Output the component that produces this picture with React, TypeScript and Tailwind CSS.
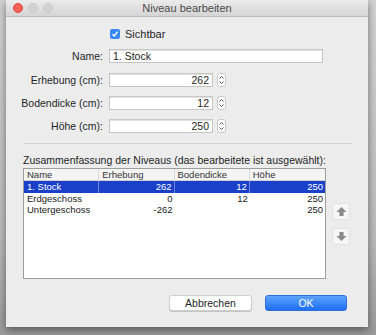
import React from 'react';

const rows = [
  { name: '1. Stock', elevation: '262', floor: '12', height: '250', selected: true },
  { name: 'Erdgeschoss', elevation: '0', floor: '12', height: '250', selected: false },
  { name: 'Untergeschoss', elevation: '-262', floor: '', height: '250', selected: false },
];

const Spinner = () => (
  <div className="ml-[4px] flex h-[14px] w-[9px] items-center justify-center rounded-[3px] border border-[#c9c9c9] bg-white">
    <svg width="5" height="10" viewBox="0 0 5 10" fill="none" stroke="#555" strokeWidth="1">
      <path d="M0.5 3.5 L2.5 1.5 L4.5 3.5" />
      <path d="M0.5 6.5 L2.5 8.5 L4.5 6.5" />
    </svg>
  </div>
);

const NumberRow = ({ label, value, className }: { label: string; value: string; className?: string }) => (
  <div className={`flex h-[14px] items-center leading-[14px] ${className ?? ''}`}>
    <div className="w-[103px] pr-[6px] text-right">{label}</div>
    <div className="flex h-[14px] w-[104px] items-center justify-end border border-[#c6c6c6] bg-white pr-[3px] shadow-[inset_0_1px_0_#e2e2e2]">
      {value}
    </div>
    <Spinner />
  </div>
);

const Arrow = ({ down }: { down?: boolean }) => (
  <button className="flex h-[17px] w-[18px] items-center justify-center rounded-[3px] border border-[#e0e0e0] bg-[#f6f6f6]">
    <svg width="11" height="11" viewBox="0 0 12 12" className={down ? 'rotate-180' : ''}>
      <path d="M6 1 L11.5 6.5 H8.3 V11 H3.7 V6.5 H0.5 Z" fill="#8a8a8a" />
    </svg>
  </button>
);

export default function App() {
  return (
    <div className="h-[335px] w-[376px] overflow-hidden bg-[linear-gradient(#d2d2d2,#bcbcbc_70%,#9a9a9a)] pl-[6px] font-['Liberation_Sans',sans-serif] text-[10.5px] text-[#1f1f1f]">
      <div className="flex h-[327px] w-[362px] flex-col bg-[#ececec] shadow-[0_3px_8px_rgba(0,0,0,0.45)]">
        {/* title bar */}
        <div className="grid h-[17px] grid-cols-[1fr_auto_1fr] items-center border-b border-[#bdbdbd] bg-[linear-gradient(#ebebeb,#d4d4d4)]">
          <div className="flex gap-[5px] pl-[7px]">
            <span className="h-[10px] w-[10px] rounded-full border border-[#e0443e] bg-[#fc5f57]" />
            <span className="h-[10px] w-[10px] rounded-full border border-[#c8c8c8] bg-[#d2d2d2]" />
            <span className="h-[10px] w-[10px] rounded-full border border-[#c8c8c8] bg-[#d2d2d2]" />
          </div>
          <div className="text-[11px] leading-[15px] text-[#4a4a4a]">Niveau bearbeiten</div>
          <div />
        </div>

        {/* form */}
        <div className="flex flex-col pl-[17px] pr-[16px]">
          <div className="ml-[87px] mt-[12px] flex h-[10px] items-center leading-[10px]">
            <span className="flex h-[10px] w-[10px] items-center justify-center rounded-[2px] bg-[#3a86f5]">
              <svg width="8" height="8" viewBox="0 0 8 8" fill="none" stroke="white" strokeWidth="1.4">
                <path d="M1.5 4.2 L3.3 6 L6.6 1.8" />
              </svg>
            </span>
            <span className="ml-[5px] text-[11px]">Sichtbar</span>
          </div>

          <div className="-ml-[17px] mt-[10px] flex h-[14px] items-center leading-[14px]">
            <div className="w-[103px] pr-[6px] text-right">Name:</div>
            <div className="flex h-[14px] w-[214px] items-center border border-[#c6c6c6] bg-white pl-[3px] shadow-[inset_0_1px_0_#e2e2e2]">
              1. Stock
            </div>
          </div>
          <NumberRow label="Erhebung (cm):" value="262" className="-ml-[17px] mt-[10px]" />
          <NumberRow label="Bodendicke (cm):" value="12" className="-ml-[17px] mt-[9px]" />
          <NumberRow label="Höhe (cm):" value="250" className="-ml-[17px] mt-[9px]" />

          <div className="mt-[10px] h-px bg-[#d4d4d4]" />

          <div className="mt-[10px] leading-[12px]">Zusammenfassung der Niveaus (das bearbeitete ist ausgewählt):</div>

          <div className="mt-[2px] flex items-center gap-[6px]">
            <div className="h-[111px] w-[303px] border border-[#9e9e9e] bg-white text-[9.5px] leading-[11.7px]">
              <div className="grid h-[12px] grid-cols-4 border-b border-[#d0d0d0] bg-[#f4f4f4] text-[#333]">
                {['Name', 'Erhebung', 'Bodendicke', 'Höhe'].map((h, i) => (
                  <div key={h} className={`pl-[3px] ${i < 3 ? 'border-r border-[#d9d9d9]' : ''}`}>{h}</div>
                ))}
              </div>
              {rows.map((r) => (
                <div
                  key={r.name}
                  className={`grid h-[11.7px] grid-cols-4 ${r.selected ? 'bg-[#1a3fc8] text-white' : 'text-[#1a1a1a]'}`}
                >
                  <div className={`pl-[3px] ${r.selected ? 'border-r border-[#6f87dd]' : ''}`}>{r.name}</div>
                  <div className={`pr-[2px] text-right ${r.selected ? 'border-r border-[#6f87dd]' : ''}`}>{r.elevation}</div>
                  <div className={`pr-[2px] text-right ${r.selected ? 'border-r border-[#6f87dd]' : ''}`}>{r.floor}</div>
                  <div className="pr-[2px] text-right">{r.height}</div>
                </div>
              ))}
            </div>
            <div className="flex flex-col gap-[8px]">
              <Arrow />
              <Arrow down />
            </div>
          </div>

          <div className="mt-[16px] flex justify-end gap-[13px] pr-[5px]">
            <button className="h-[16px] w-[83px] rounded-[3px] border border-[#cfcfcf] bg-white text-[10.5px] leading-[14px] shadow-[0_1px_0_#c4c4c4]">
              Abbrechen
            </button>
            <button className="h-[16px] w-[82px] rounded-[3px] border border-[#2e6fe0] bg-[linear-gradient(#5ea2fb,#1d6ff2)] text-[10.5px] leading-[14px] text-white">
              OK
            </button>
          </div>
        </div>
      </div>
    </div>
  );
}
